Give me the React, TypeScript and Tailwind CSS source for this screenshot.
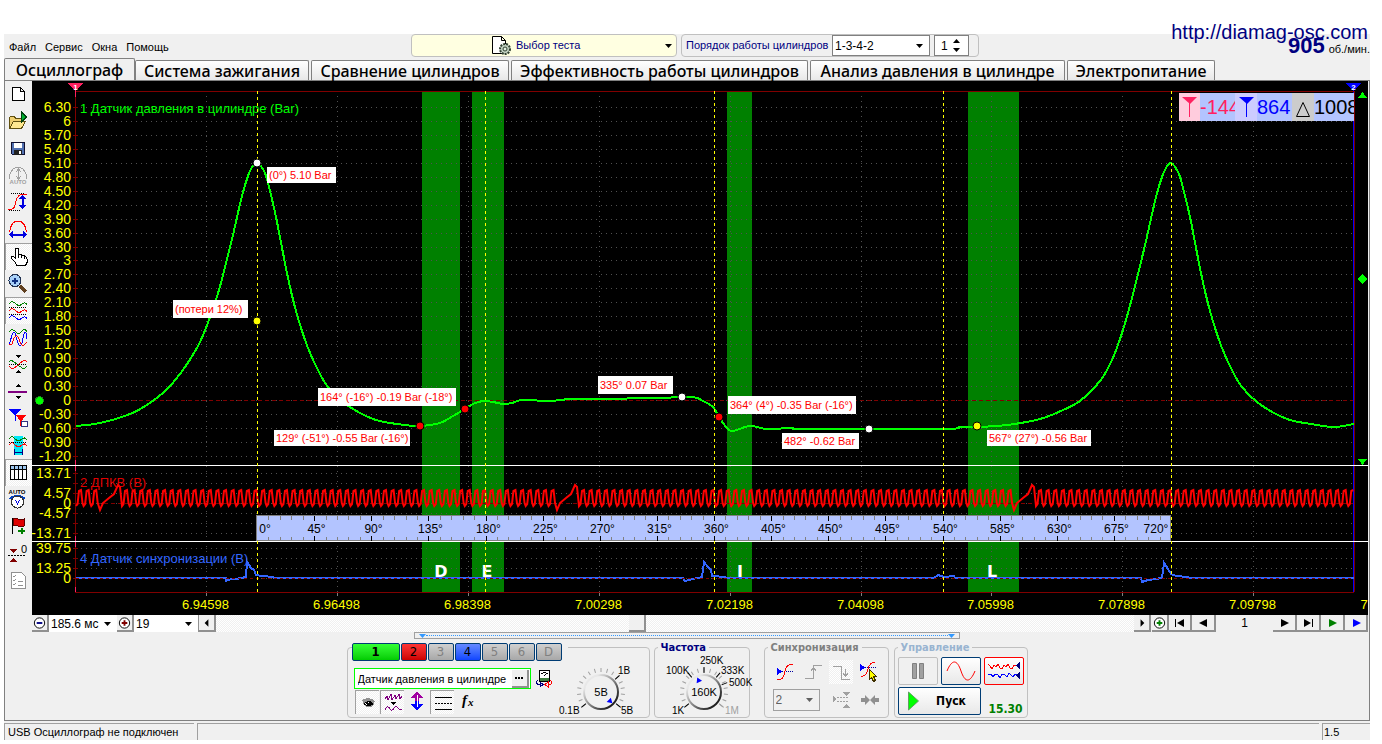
import type { ReactNode } from "react";

type Point = [number, number];

const smoothPath = (points: Point[]) => {
  let d = `M${points[0][0]} ${points[0][1]}`;
  for (let i = 0; i < points.length - 1; i++) {
    const before = points[i - 1] ?? points[i];
    const from = points[i];
    const to = points[i + 1];
    const after = points[i + 2] ?? to;
    d += `C${from[0] + (to[0] - before[0]) / 6} ${from[1] + (to[1] - before[1]) / 6} ${to[0] - (after[0] - from[0]) / 6} ${
      to[1] - (after[1] - from[1]) / 6
    } ${to[0]} ${to[1]}`;
  }
  return d;
};

const pressureCurve: Point[] = [
  [76, 426], [100, 423], [130, 414], [150, 403], [165, 391], [180, 374], [198, 346], [209, 320], [219, 290],
  [232, 239], [242, 196], [250, 171], [257, 163], [264, 171], [268, 183], [276, 217], [283, 253], [290, 287],
  [298, 318], [308, 348], [318, 370], [328, 387], [347, 405], [373, 419], [397, 424], [420, 426], [440, 423],
  [453, 416], [465, 409], [473, 404], [483, 401], [493, 402], [503, 404], [512, 403], [523, 400], [550, 401],
  [570, 399], [593, 399], [657, 398], [692, 397], [703, 401], [713, 407], [719, 417], [727, 428], [733, 431],
  [750, 426], [767, 429], [792, 428], [807, 429], [943, 429], [960, 427], [977, 427], [1007, 425], [1040, 419],
  [1063, 410], [1080, 401], [1100, 381], [1112, 360], [1123, 330], [1133, 294], [1146, 241], [1156, 197],
  [1164, 172], [1171, 163], [1178, 172], [1182, 184], [1190, 217], [1197, 253], [1204, 287], [1212, 318],
  [1222, 348], [1232, 370], [1242, 387], [1261, 405], [1287, 419], [1311, 424], [1334, 427], [1354, 424]
];

// crank sensor: 60 - 2 teeth per turn
const TURN = 457;
const TOOTH = TURN / 60;

const crankCurve = (() => {
  const points: Point[] = [];
  let x = 76;
  let gap = 100;
  while (x < 1353) {
    if (x + TOOTH > gap) {
      points.push([gap, 510], [gap + 3, 503], [gap + 9, 498], [gap + 14, 494], [gap + 18, 485], [gap + 20, 487]);
      x = gap + 22;
      gap += TURN;
    }
    points.push([x, 506], [x + 1.5, 504], [x + 3, 491], [x + 5, 490], [x + 6.5, 503]);
    x += TOOTH;
  }
  return points.filter((p) => p[0] < 1354).map((p) => p.join(",")).join(" ");
})();

const syncCurve =
  "76,578 226,578 226,581 231,579 236,579 246,577 247,562 251,568 254,570 256,575 262,576 273,577 274,578 683,578 685,581 693,579 702,577 704,562 708,567 711,570 712,576 725,577 726,578 934,578 938,575 944,577 954,576 955,578 1141,578 1142,582 1148,580 1162,578 1164,563 1168,569 1171,574 1176,576 1188,577 1189,578 1354,578";

const bands = [
  { x: 422, width: 38, letter: "D", letterX: 441 },
  { x: 472, width: 32, letter: "E", letterX: 487 },
  { x: 727, width: 25, letter: "I", letterX: 740 },
  { x: 968, width: 51, letter: "L", letterX: 992 }
];

const strokeLines = [257.5, 485.5, 714.5, 943.5, 1171.5];
const timeTicks = Array.from({ length: 9 }, (_, i) => 206.5 + i * 131 - (i > 5 ? 1 : 0));
const barRows = Array.from({ length: 26 }, (_, i) => ({
  y: Math.round(107 + i * 13.95) + 0.5,
  value: 6.3 - i * 0.3
}));
const sideRows = [473.5, 483.5, 493.5, 503.5, 513.5, 523.5, 533.5, 548.5, 558.5, 568.5, 578.5];

const sideLabels = [
  { y: 478, text: "13.71" },
  { y: 498, text: "4.57" },
  { y: 508, text: "0" },
  { y: 518, text: "-4.57" },
  { y: 538, text: "-13.71" },
  { y: 553, text: "39.75" },
  { y: 573, text: "13.25" },
  { y: 583, text: "0" }
];

const callouts = [
  { x: 267, y: 167, width: 69, height: 16, text: "(0°) 5.10 Bar" },
  { x: 173, y: 300, width: 75, height: 18, text: "(потери 12%)" },
  { x: 318, y: 388, width: 138, height: 18, text: "164° (-16°) -0.19 Bar (-18°)" },
  { x: 274, y: 430, width: 136, height: 16, text: "129° (-51°) -0.55 Bar (-16°)" },
  { x: 598, y: 376, width: 75, height: 18, text: "335° 0.07 Bar" },
  { x: 728, y: 396, width: 128, height: 18, text: "364° (4°) -0.35 Bar (-16°)" },
  { x: 782, y: 433, width: 77, height: 16, text: "482° -0.62 Bar" },
  { x: 987, y: 430, width: 104, height: 16, text: "567° (27°) -0.56 Bar" }
];

const dots = [
  { x: 257, y: 163, fill: "#fff" },
  { x: 257, y: 321, fill: "#ff0" },
  { x: 420, y: 426, fill: "#f00" },
  { x: 465, y: 409, fill: "#f00" },
  { x: 682, y: 397, fill: "#fff" },
  { x: 719, y: 417, fill: "#f00" },
  { x: 869, y: 429, fill: "#fff" },
  { x: 977, y: 426, fill: "#ff0" }
];

const rulerX = (deg: number) => Math.round(257 + (deg * 914) / 720) + 0.5;

const formatBar = (value: number) => {
  const rounded = Math.round(value * 10) / 10;
  return Number.isInteger(rounded) ? String(Math.abs(rounded)) : rounded.toFixed(2);
};

const Scope = () => (
  <div className="relative bg-black">
    <svg viewBox="32 81 1336 534" className="block w-full font-['Liberation_Sans',sans-serif]" shapeRendering="crispEdges">
      <g fill="green">
        {bands.map((band) => (
          <rect key={band.letter} x={band.x} y="92" width={band.width} height="500" />
        ))}
      </g>
      <g stroke="#505050" strokeDasharray="1 4">
        {barRows.map((row) => (
          <path key={row.y} d={`M81 ${row.y}H1353`} />
        ))}
        {sideRows.map((y) => (
          <path key={y} d={`M81 ${y}H1353`} />
        ))}
        {timeTicks.map((x) => (
          <path key={x} d={`M${x} 96V592`} />
        ))}
      </g>
      <g stroke="#808080">
        {timeTicks.map((x) => (
          <path key={x} d={`M${x} 592v4`} />
        ))}
      </g>
      <g fill="#fff" fontSize="16" fontWeight="700" textAnchor="middle" className="font-['DejaVu_Sans',sans-serif]">
        {bands.map((band) => (
          <text key={band.letter} x={band.letterX} y="577">{band.letter}</text>
        ))}
      </g>

      <path d="M75.5 91V592.5H1354" fill="none" stroke="#800000" />
      <g stroke="#800000">
        {[...barRows.map((row) => row.y), ...sideRows].map((y) => (
          <path key={y} d={`M73 ${y}h5`} />
        ))}
      </g>
      <path d="M76 400.5H1354M76 503.5H1354" stroke="#800000" strokeDasharray="4 3" />
      <path d="M1353.5 90V592" stroke="#00f" />
      <path d="M75 91.5H1354.5V592" fill="none" stroke="#800000" />
      <path d="M75.5 90v7M75.5 460v11M75.5 536v11M75.5 587v5" stroke="#ff2060" />
      <path d="M32 465.5H1368M32 541.5H1368" stroke="#fff" />

      <g fontSize="13">
        <text x="80" y="113" fill="#0f0">1 Датчик давления в цилиндре (Bar)</text>
        <text x="80" y="487" fill="#e00000">2 ДПКВ (В)</text>
        <text x="80" y="563" fill="#3366ff">4 Датчик синхронизации (В)</text>
      </g>

      <path d={smoothPath(pressureCurve)} fill="none" stroke="#0f0" strokeWidth="2" />
      <polyline points={crankCurve} fill="none" stroke="#f00" strokeWidth="2" shapeRendering="geometricPrecision" />
      <polyline points={syncCurve} fill="none" stroke="#3366ff" strokeWidth="2" />
      <path d="M76 578.5H1354" stroke="#800000" strokeDasharray="3 3" />
      <g stroke="#ff0" strokeDasharray="3 3">
        {strokeLines.map((x) => (
          <path key={x} d={`M${x} 91V592`} />
        ))}
      </g>

      <rect x="256.5" y="515.5" width="914" height="25" fill="#b3c4ff" stroke="#808080" />
      {Array.from({ length: 79 }, (_, i) => (i + 1) * 9).map((deg) => (
        <path
          key={deg}
          d={deg % 45 ? `M${rulerX(deg)} 516v4M${rulerX(deg)} 537v3` : `M${rulerX(deg)} 516v5M${rulerX(deg)} 536v5`}
          stroke={deg % 45 ? "#808080" : "#000"}
        />
      ))}
      <g fontSize="12" textAnchor="middle">
        {Array.from({ length: 17 }, (_, i) => i * 45).map((deg) => (
          <text key={deg} x={deg === 0 ? 265 : deg === 720 ? 1156 : rulerX(deg) + 2} y="533">{deg}°</text>
        ))}
      </g>

      <g fontSize="14" fill="#ff0" textAnchor="end">
        {barRows.map((row) => (
          <text key={row.y} x="71" y={row.y + 4.5}>{formatBar(row.value)}</text>
        ))}
        {sideLabels.map((label) => (
          <text key={label.y} x="71" y={label.y}>{label.text}</text>
        ))}
      </g>
      <g fontSize="13" fill="#ff0" textAnchor="middle">
        {timeTicks.map((x, i) => (
          <text key={x} x={x - 1} y="609">{(6.94598 + i * 0.019).toFixed(5)}</text>
        ))}
        <text x="1364" y="609">7</text>
      </g>

      <g stroke="#000" shapeRendering="geometricPrecision">
        {dots.map((dot) => (
          <circle key={dot.x + dot.y} cx={dot.x} cy={dot.y} r="4" fill={dot.fill} />
        ))}
      </g>
      {callouts.map((box) => (
        <g key={box.text}>
          <rect x={box.x} y={box.y} width={box.width} height={box.height} fill="#fff" />
          <text x={box.x + 2} y={box.y + box.height / 2 + 4} fontSize="11" fill="#f00">{box.text}</text>
        </g>
      ))}

      <path d="M68 83h15l-7.500 8z" fill="#ff2060" />
      <path d="M1346 83h15l-7.500 8z" fill="#00f" />
      <g fill="#fff" fontSize="8" fontWeight="700" textAnchor="middle">
        <text x="75.500" y="90">1</text>
        <text x="1353.500" y="90">2</text>
      </g>
      <path d="M1358 98h9l-4.500-6zM1358 459h9l-4.500 6zM1362.500 274l5 5-5 5-5-5z" fill="#0f0" />
      <circle cx="39.500" cy="400.500" r="4" fill="#0f0" stroke="#208020" />
    </svg>

    <div className="absolute top-3 right-[14px] flex h-7 w-[175px] items-center overflow-hidden bg-[#b3c4ff] font-['Liberation_Sans',sans-serif] text-xl leading-7">
      <svg viewBox="0 0 21 28" className="h-7 w-[21px] shrink-0 bg-[#ffccdd]">
        <path d="M3 4h15l-7 7z" fill="#ff2060" />
        <path d="M10.500 8v16" stroke="#ff2060" />
      </svg>
      <span className="w-[35px] shrink-0 overflow-hidden text-[#ff2060]">-144</span>
      <svg viewBox="0 0 22 28" className="h-7 w-[22px] shrink-0 bg-[#ccccff]">
        <path d="M4 4h15l-7 7z" fill="#00f" />
        <path d="M11.500 8v16" stroke="#00f" />
      </svg>
      <span className="w-[35px] shrink-0 overflow-hidden text-[#0000ff]">864</span>
      <svg viewBox="0 0 22 28" className="h-7 w-[22px] shrink-0 bg-[#cccccc]">
        <path d="M4.500 23.500h13l-6.500-14z" fill="none" stroke="#000" />
      </svg>
      <span className="shrink-0 text-black">1008</span>
    </div>
  </div>
);

interface Tool {
  label: string;
  pressed?: boolean;
  art: ReactNode;
}

const tools: Tool[] = [
  {
    label: "Новый",
    art: <path d="M7.500 6.500h8l4 4v9h-12zM15.500 6.500v4h4" fill="#fff" stroke="#000" />
  },
  {
    label: "Открыть",
    art: (
      <>
        <path d="M4.500 20.500v-11l1-1h4l1 2h6v3" fill="#f0d070" stroke="#605010" />
        <path d="M4.500 20.500l4-7h12l-4 7z" fill="#ffe890" stroke="#605010" />
        <path d="M16.500 4v10l5-5z" fill="#00b030" stroke="#004010" />
      </>
    )
  },
  {
    label: "Сохранить",
    art: (
      <>
        <path d="M6.500 7.500h13v12h-12l-1-1z" fill="#5070b0" stroke="#101030" />
        <path d="M9 8h8v5H9z" fill="#fff" />
        <path d="M9 15h8v5H9z" fill="#202020" />
        <path d="M14 16h2v3h-2z" fill="#fff" />
      </>
    )
  },
  {
    label: "Автомасштаб",
    art: (
      <g fill="none" stroke="#a0a0a0">
        <path d="M4.500 17v-4c2-5 5-8 8.500-8s6.500 3 8.500 8v4M13.500 7v10M11 10l2.500-3 2.500 3M11 14l2.500 3 2.500-3" />
        <text x="13" y="22" fontSize="6" fontWeight="700" textAnchor="middle" fill="#a0a0a0" stroke="none">AUTO</text>
      </g>
    )
  },
  {
    label: "Масштаб по вертикали",
    art: (
      <g fill="none">
        <path d="M6 4.500h14M4 21.500h12" stroke="#000" strokeDasharray="1 1" />
        <path d="M3 20c7 2 7-4 8-8s4-9 11-6" stroke="#f00" />
        <path d="M17.500 7v12" stroke="#0000e0" strokeWidth="2" />
        <path d="M14 10l3.500-4 3.500 4zM14 16l3.500 4 3.500-4z" fill="#0000e0" />
      </g>
    )
  },
  {
    label: "Масштаб по горизонтали",
    art: (
      <g fill="none">
        <path d="M4.500 16c1-7 4-11 8.500-11s7.500 4 8.500 11" stroke="#f00" />
        <path d="M6 18.500h14" stroke="#0000e0" strokeWidth="2" />
        <path d="M8 15l-4 3.500L8 22zM18 15l4 3.500-4 3.500z" fill="#0000e0" />
      </g>
    )
  },
  {
    label: "Рука",
    pressed: true,
    art: (
      <path
        d="M11.500 22.500l-1-3-4-4c-1-2 1-3 2-2l2 2v-9c0-2 3-2 3 0v6c0-2 3-2 3 0v1c0-2 3-1 3 0v1c1-1 2.500-.500 2.500 1v4l-1.500 3zM13.500 12v3M16.500 13v2M19.500 14v2"
        fill="#fff"
        stroke="#000"
      />
    )
  },
  {
    label: "Увеличить",
    art: (
      <>
        <path d="M15 16l6 6" stroke="#604020" strokeWidth="3" />
        <circle cx="10" cy="10.500" r="6" fill="#a8d0f8" stroke="#203050" />
        <path d="M10 7.500v6M7 10.500h6" stroke="#103080" strokeWidth="2" />
      </>
    )
  },
  {
    label: "Разделить каналы",
    pressed: true,
    art: (
      <g fill="none">
        <path d="M4 7c3-4 5-2 7 0s4 2 6 0 4-1 5 1" stroke="#008000" />
        <path d="M4 14c3-4 5-2 7 0s4 2 6 0 4-1 5 1" stroke="#f00" />
        <path d="M4 21c3-4 5-2 7 0s4 2 6 0 4-1 5 1" stroke="#00f" />
        <path d="M4 10.500h18M4 17.500h18" stroke="#000" strokeDasharray="1 1" />
      </g>
    )
  },
  {
    label: "Наложить каналы",
    art: (
      <g fill="none">
        <path d="M4 8c3-4 5-2 7 0s4 2 6-1 4-1 5 1" stroke="#008000" />
        <path d="M4 20c2-3 3-12 5-12s3 14 6 14 3-14 5-14 2 5 2 7" stroke="#00f" />
        <path d="M4 20c2 2 3 1 4-3s4-8 6-2 3 7 5 6l3-3" stroke="#f00" />
      </g>
    )
  },
  {
    label: "Совместить нули",
    art: (
      <g fill="none">
        <path d="M4 11c2-3 4-1 9 3s7 5 9 1" stroke="#008000" />
        <path d="M4 15c2 4 5 3 9-1s7-6 9-3" stroke="#f00" />
        <path d="M4 13.500h18" stroke="#000" strokeDasharray="1 1" />
        <path d="M11 4h5l-2.500 3zM11 22h5l-2.500-3z" fill="#000" />
      </g>
    )
  },
  {
    label: "Курсор уровня",
    art: (
      <>
        <path d="M3 13.500h19" stroke="#800080" strokeWidth="2" />
        <path d="M11 9h5l-2.500-3zM11 18h5l-2.500 3z" />
      </>
    )
  },
  {
    label: "Маркеры",
    art: (
      <>
        <path d="M4 4h12l-6 7z" fill="#00f" />
        <path d="M10.500 8v8" stroke="#00f" />
        <path d="M11 10h10l-5 7z" fill="#f00" />
        <path d="M15.500 13v8" stroke="#f00" />
        <path d="M16.500 16.500h6v5h-6z" fill="#fff" stroke="#303080" />
      </>
    )
  },
  {
    label: "Область",
    art: (
      <g fill="none">
        <path d="M9 4h9v19H9z" fill="#00e8f8" />
        <path d="M4 7c3-4 4-2 6 0s5 2 7 0 3-1 5 1" stroke="#008000" />
        <path d="M4 13c3-4 4-2 6 0s5 2 7 0 3-1 5 1" stroke="#f00" />
        <path d="M4 10.500h18" stroke="#000" strokeDasharray="1 1" />
        <path d="M9.500 17v6M17.500 17v6M9 20.500h9" stroke="#000080" />
      </g>
    )
  },
  {
    label: "Таблица",
    pressed: true,
    art: (
      <>
        <path d="M5.500 6.500h16v14h-16z" fill="#fff" stroke="#000" />
        <path d="M6 7h15v3H6z" fill="#a0c8f0" />
        <path d="M5 10.500h17M9.500 7v13M13.500 7v13M17.500 7v13" stroke="#000" />
      </>
    )
  },
  {
    label: "Авто вольтметр",
    art: (
      <>
        <text x="12" y="8" fontSize="6" fontWeight="700" textAnchor="middle">AUTO</text>
        <path d="M5 13c3-4 11-4 15 0" fill="none" stroke="#0040c0" strokeWidth="2" />
        <circle cx="12.500" cy="16" r="6" fill="#fff" stroke="#303030" />
        <path d="M10.500 14l2 4 2-4" fill="none" stroke="#0000e0" />
      </>
    )
  },
  {
    label: "Добавить метку",
    art: (
      <>
        <path d="M7.500 5v16" stroke="#000" />
        <path d="M8 6c4-2 6 2 11 0v7c-5 2-7-2-11 0z" fill="#e00000" stroke="#600000" />
        <path d="M16.500 15v6M13 18h7" stroke="#008000" strokeWidth="2" />
      </>
    )
  },
  {
    label: "Обнулить",
    art: (
      <>
        <path d="M4 9h8l-4 4zM4 22h8l-4-4z" fill="#800000" />
        <path d="M3 15.500h18" stroke="#000" strokeDasharray="2 1" />
        <text x="19" y="13" fontSize="11" textAnchor="middle">0</text>
      </>
    )
  },
  {
    label: "Список",
    art: (
      <>
        <path d="M6.500 5.500h10l4 4v12h-14z" fill="#fff" stroke="#909090" />
        <path d="M8 9l1 1 2-2M8 13l1 1 2-2M8 17l1 1 2-2M13 14.500h5M13 18.500h5" fill="none" stroke="#909090" />
      </>
    )
  }
];

const Toolbar = () => (
  <div className="flex w-[27px] shrink-0 flex-col">
    {tools.map((tool) => (
      <button
        key={tool.label}
        type="button"
        title={tool.label}
        className={`h-[27px] w-[27px] ${
          tool.pressed
            ? "bg-[repeating-conic-gradient(#fff_0_25%,#f0f0f0_0_50%)] bg-[length:2px_2px] shadow-[inset_1px_1px_#a0a0a0]"
            : ""
        }`}
      >
        <svg viewBox="0 0 27 27" width="27" height="27" shapeRendering="crispEdges">
          {tool.art}
        </svg>
      </button>
    ))}
  </div>
);

const Arrow = ({ className = "" }: { className?: string }) => (
  <svg viewBox="0 0 7 4" className={`pointer-events-none h-1 w-[7px] ${className}`}>
    <path d="M0 0h7L3.500 4z" fill="currentColor" />
  </svg>
);

interface ComboProps {
  label: string;
  value: string;
  className?: string;
}

const Combo = ({ label, value, className = "" }: ComboProps) => (
  <div className={`relative flex items-center bg-white ${className}`}>
    <select aria-label={label} className="h-full w-full appearance-none bg-transparent pl-[2px] text-xs leading-4 outline-none">
      <option>{value}</option>
    </select>
    <Arrow className="absolute right-[6px]" />
  </div>
);

const BevelButton = ({ label, className, children }: { label: string; className: string; children: ReactNode }) => (
  <button
    type="button"
    title={label}
    className={`flex h-[17px] shrink-0 items-center justify-center border-r-2 border-b-2 border-[#909090] bg-[#f0f0f0] ${className}`}
  >
    <svg viewBox="0 0 16 14" width="16" height="14">
      {children}
    </svg>
  </button>
);

const BottomBar = () => (
  <div className="flex h-[17px] items-stretch">
    <BevelButton label="Уменьшить" className="w-[17px]">
      <circle cx="8" cy="7" r="5.500" fill="#fff" stroke="#000" />
      <path d="M5 7h6" stroke="#000080" strokeWidth="2" />
    </BevelButton>
    <Combo label="Развёртка" value="185.6 мс" className="w-[68px]" />
    <BevelButton label="Увеличить" className="w-[17px]">
      <circle cx="8" cy="7" r="5.500" fill="#fff" stroke="#000" />
      <path d="M5 7h6M8 4v6" stroke="#800000" strokeWidth="2" />
    </BevelButton>
    <Combo label="Масштаб" value="19" className="w-16" />
    <BevelButton label="Влево" className="w-[18px] border-l">
      <path d="M10 3v8L6 7z" />
    </BevelButton>
    <div className="flex flex-1 justify-center bg-[repeating-conic-gradient(#fff_0_25%,#f0f0f0_0_50%)] bg-[length:2px_2px]">
      <div className="mr-[75px] w-[17px] border-r-2 border-b-2 border-[#909090] bg-[#f0f0f0]" />
    </div>
    <BevelButton label="Вправо" className="w-[17px]">
      <path d="M7 3v8l4-4z" />
    </BevelButton>
    <BevelButton label="Добавить" className="ml-px w-[17px]">
      <circle cx="8" cy="7" r="5.500" fill="#fff" stroke="#000" />
      <path d="M5 7h6M8 4v6" stroke="green" strokeWidth="2" />
    </BevelButton>
    <BevelButton label="В начало" className="w-[23px]">
      <path d="M3 3h1v8H3zM12 3v8L5 7z" />
    </BevelButton>
    <BevelButton label="Назад" className="w-6">
      <path d="M12 3v8L4 7z" />
    </BevelButton>
    <span className="w-[57px] text-center text-xs leading-4">1</span>
    <BevelButton label="Вперёд" className="w-6">
      <path d="M5 3v8l8-4z" />
    </BevelButton>
    <BevelButton label="В конец" className="w-6">
      <path d="M4 3v8l7-4zM12 3h1v8h-1z" />
    </BevelButton>
    <BevelButton label="Воспроизвести" className="w-6">
      <path d="M5 3v8l8-4z" fill="green" />
    </BevelButton>
    <BevelButton label="Воспроизвести всё" className="w-[23px]">
      <path d="M5 3v8l8-4z" fill="#00f" />
    </BevelButton>
  </div>
);

const channels = [
  { name: "1", className: "w-12 bg-linear-to-b from-[#33ff33] to-[#00cc00] font-bold text-black" },
  { name: "2", className: "w-[26px] bg-linear-to-b from-[#ff3333] to-[#cc0000] text-black" },
  { name: "3", className: "w-[26px] bg-linear-to-b from-[#d0d0d0] to-[#a8a8a8] text-[#808080]" },
  { name: "4", className: "w-[26px] bg-linear-to-b from-[#6688ff] to-[#1144ff] text-black" },
  { name: "5", className: "w-[26px] bg-linear-to-b from-[#d0d0d0] to-[#a8a8a8] text-[#808080]" },
  { name: "6", className: "w-[26px] bg-linear-to-b from-[#d0d0d0] to-[#a8a8a8] text-[#808080]" },
  { name: "D", className: "w-[26px] bg-linear-to-b from-[#d0d0d0] to-[#a8a8a8] text-[#808080]" }
];

interface KnobProps {
  label: string;
  value: string;
  pointer: number;
  viewBox: string;
  className: string;
  marks: { angle: number; text: string; x: number; y: number; muted?: boolean }[];
}

// angles run clockwise from twelve o'clock, the dial centre is 0 0
const Knob = ({ label, value, pointer, viewBox, className, marks }: KnobProps) => (
  <div className={`relative shrink-0 ${className}`}>
    <svg viewBox={viewBox} className="h-full w-full overflow-visible">
      <defs>
        <linearGradient id="knobRim" x1="0" y1="0" x2="1" y2="1">
          <stop offset="0.200" stopColor="#e8e8e8" />
          <stop offset="0.850" stopColor="#202020" />
        </linearGradient>
      </defs>
      {Array.from({ length: 17 }, (_, i) => -128 + i * 16).map((angle) => (
        <path key={angle} d="M0-20v-4" stroke="#a0a0a0" transform={`rotate(${angle})`} />
      ))}
      <circle r="17" fill="#f0f0f0" stroke="url(#knobRim)" strokeWidth="2" />
      {marks.map((mark) => (
        <g key={mark.text}>
          <path d="M0-19v-6" stroke={mark.muted ? "#a0a0a0" : "#000"} transform={`rotate(${mark.angle})`} />
          <text x={mark.x} y={mark.y} fontSize="10" fill={mark.muted ? "#a0a0a0" : "#000"}>{mark.text}</text>
        </g>
      ))}
      <path d="M-3-11h6l-3-5z" fill="#00f" transform={`rotate(${pointer})`} />
      <text y="4" fontSize="11" textAnchor="middle">{value}</text>
    </svg>
    <input type="range" aria-label={label} className="absolute inset-0 h-full w-full cursor-pointer opacity-0" />
  </div>
);

const channelTools: Tool[] = [
  {
    label: "Показать",
    pressed: true,
    art: (
      <>
        <path d="M6 9c4-3 11-2 13 1l-2 5c-4 2-7 1-9-1z" fill="#909090" />
        <path d="M8 13c2-3 6-3 9 0-3 2-6 2-9 0z" fill="#fff" stroke="#000" />
        <circle cx="13" cy="12.500" r="2.500" />
        <path d="M12 11h1v1h-1z" fill="#fff" />
      </>
    )
  },
  {
    label: "Фильтр",
    pressed: true,
    art: (
      <>
        <path d="M4 8l2-3 1 4 3-6 1 6 3-5 1 4 3-5 1 5 2-3" fill="none" stroke="#800080" />
        <path d="M10 11h5l-2.500 3z" />
        <path d="M4 19c2-5 4-3 5-1s3 1 4-1 3-2 4 0 2 2 4 1" fill="none" stroke="#800080" />
      </>
    )
  },
  {
    label: "Инверсия",
    art: (
      <>
        <path d="M12 2l7 6h-5v4h-4V8H5z" fill="#a000a0" />
        <path d="M12 20l7-6h-5v-3h-4v3H5z" fill="#0000ff" />
        <path d="M12 5v12" stroke="#fff" />
      </>
    )
  },
  {
    label: "Линии",
    pressed: true,
    art: (
      <>
        <path d="M4 6.500h17M4 18.500h17" stroke="#000" />
        <path d="M4 12.500h17" stroke="#000" strokeDasharray="2 1" />
      </>
    )
  },
  {
    label: "Функция",
    art: (
      <g className="font-['Liberation_Serif',serif]" fontStyle="italic" fontWeight="700">
        <text x="7" y="15" fontSize="15">f</text>
        <text x="13" y="16" fontSize="11">x</text>
      </g>
    )
  }
];

const syncTools: Tool[] = [
  {
    label: "По уровню",
    art: (
      <g fill="none">
        <path d="M4 8l5 3.500L4 15z" fill="#00f" />
        <path d="M9 11.500h12" stroke="#0000a0" strokeDasharray="1 1" />
        <path d="M4 19c6 2 7-3 8-8s3-7 8-7" stroke="#f00" />
      </g>
    )
  },
  {
    label: "По фронту",
    art: <path d="M4 18.500h8.500v-13h8M12.500 8v5M10 11l2.500-3.500 2.500 3.500" fill="none" stroke="#a0a0a0" />
  },
  {
    label: "По спаду",
    pressed: true,
    art: <path d="M4 6.500h8.500v13h8M16.500 9v7M14 13l2.500 3.500 2.500-3.500" fill="none" stroke="#a0a0a0" />
  },
  {
    label: "Выбрать уровень",
    art: (
      <g fill="none">
        <path d="M3 4l5 3.500L3 11z" fill="#00f" />
        <path d="M8 7.500h12" stroke="#0000a0" strokeDasharray="1 1" />
        <path d="M4 16c5 1 6-3 7-7s3-7 7-6" stroke="#f00" />
        <path d="M12.500 9.500v10l2-2 2 4 2-1-2-4h3z" fill="#ff0" stroke="#403000" />
      </g>
    )
  }
];

const SmallTool = ({ tool }: { tool: Tool }) => (
  <button
    type="button"
    title={tool.label}
    className={`h-6 w-6 ${tool.pressed ? "bg-[repeating-conic-gradient(#fff_0_25%,#f0f0f0_0_50%)] bg-[length:2px_2px]" : ""}`}
  >
    <svg viewBox="0 0 24 24" width="24" height="24" shapeRendering="crispEdges">
      {tool.art}
    </svg>
  </button>
);

const groupClass = "rounded border border-[#c0c0c0]";
const legendClass = "ml-[3px] h-[9px] px-[3px] text-[11px] leading-[9px] font-bold font-['DejaVu_Sans_Condensed',sans-serif]";

const ControlPanel = () => (
  <div className="flex h-[75px] justify-center">
    <fieldset className={`w-[303px] ${groupClass}`}>
      <legend className="ml-1 flex h-[9px] items-start gap-px pr-[6px] font-['DejaVu_Sans_Condensed',sans-serif]">
        {channels.map((channel) => (
          <button
            key={channel.name}
            type="button"
            className={`h-[18px] shrink-0 rounded-xs border border-[#003c74] text-center text-[13px] leading-4 ${channel.className}`}
          >
            {channel.name}
          </button>
        ))}
      </legend>
      <div className="flex">
        <div className="w-[200px] shrink-0 pt-4 pl-[6px]">
          <div className="flex items-center gap-1">
            <div className="flex h-[21px] w-[177px] shrink-0 items-center border border-[#00ff00] bg-white pr-px">
              <input
                aria-label="Название канала"
                defaultValue="Датчик давления в цилиндре"
                className="min-w-0 flex-1 pl-[3px] text-[11px] leading-4 outline-none"
              />
              <button type="button" title="Выбрать датчик" className="flex h-[18px] w-[17px] items-center justify-center gap-px border-r-2 border-b-2 border-[#909090] bg-[#f0f0f0]">
                <i className="size-[2px] bg-black" />
                <i className="size-[2px] bg-black" />
                <i className="size-[2px] bg-black" />
              </button>
            </div>
            <button type="button" title="Сменить прибор" className="shrink-0">
              <svg viewBox="0 0 19 19" width="19" height="19" shapeRendering="crispEdges">
                <path d="M4.500 1.500h10v11h-10z" fill="#fff" stroke="#000" />
                <path d="M5 9h9v3H5z" fill="#408040" />
                <path d="M6.500 5c2-2 4-2 6 0M9.500 7l2-3" fill="none" stroke="#000" />
                <path d="M3 11c-3 2-2 4 2 5M5 13v5l3-2.500z" fill="none" stroke="#000080" />
                <path d="M15 11c3 2 3 4-2 5M13 13v5l-3-2.500z" fill="none" stroke="#f00" />
              </svg>
            </button>
          </div>
          <div className="flex gap-px pt-px pl-px">
            {channelTools.map((tool) => (
              <div key={tool.label} className={`h-6 w-6 overflow-hidden ${tool.pressed ? "border-t border-l border-[#a0a0a0]" : ""}`}>
                <SmallTool tool={tool} />
              </div>
            ))}
          </div>
        </div>
        <Knob
          label="Чувствительность"
          value="5В"
          pointer={135}
          viewBox="-53 -40 98 65"
          className="h-[65px] w-[98px]"
          marks={[
            { angle: 48, text: "1В", x: 17, y: -18 },
            { angle: -128, text: "0.1В", x: -42, y: 22 },
            { angle: 128, text: "5В", x: 20, y: 22 }
          ]}
        />
      </div>
    </fieldset>

    <fieldset className={`ml-1 w-[96px] ${groupClass}`}>
      <legend className={`${legendClass} text-[#000080]`}>Частота</legend>
      <Knob
        label="Частота"
        value="160K"
        pointer={-25}
        viewBox="-49 -40 94 65"
        className="h-[65px] w-[94px]"
        marks={[
          { angle: -128, text: "1K", x: -32, y: 22 },
          { angle: -40, text: "100K", x: -38, y: -18 },
          { angle: 0, text: "250K", x: -4, y: -28 },
          { angle: 40, text: "333K", x: 17, y: -18 },
          { angle: 68, text: "500K", x: 25, y: -6 },
          { angle: 128, text: "1M", x: 21, y: 22, muted: true }
        ]}
      />
    </fieldset>

    <fieldset className={`ml-[14px] w-[125px] ${groupClass}`}>
      <legend className={`${legendClass} text-[#808080]`}>Синхронизация</legend>
      <div className="grid grid-cols-[24px_24px_24px_24px] gap-x-1 gap-y-[5px] pt-2 pl-2">
        {syncTools.map((tool) => (
          <SmallTool key={tool.label} tool={tool} />
        ))}
        <Combo label="Канал синхронизации" value="2" className="col-span-2 h-[22px] w-[47px] border border-[#a0a0a0] bg-[#f0f0f0]! text-[#606060]" />
        <button type="button" title="Окно синхронизации" className="h-[22px]">
          <svg viewBox="0 0 24 22" width="24" height="22" shapeRendering="crispEdges">
            <path d="M13 3h8l-4 4zM13 19h8l-4-4zM4 7l4 3-4 3z" fill="#a0a0a0" />
            <path d="M8 8.500h12M8 12.500h12" stroke="#a0a0a0" strokeDasharray="2 1" />
          </svg>
        </button>
        <button type="button" title="Свести" className="h-[22px]">
          <svg viewBox="0 0 24 22" width="24" height="22">
            <path d="M4 9h4V6l5 5-5 5v-3H4zM22 9h-4V6l-5 5 5 5v-3h4z" fill="#909090" />
          </svg>
        </button>
      </div>
    </fieldset>

    <fieldset className={`ml-[5px] w-[134px] ${groupClass}`}>
      <legend className={`${legendClass} text-[#99b4d1]`}>Управление</legend>
      <div className="grid grid-cols-[40px_40px_40px] gap-x-[3px] gap-y-[2px] pt-[5px] pl-[3px]">
        <button type="button" title="Пауза" className="flex h-7 items-center justify-center rounded-xs border border-[#c0c0c0]">
          <svg viewBox="0 0 12 16" width="12" height="16">
            <path d="M.500.500h4v15h-4zM7.500.500h4v15h-4z" fill="#a0a0a0" stroke="#808080" />
          </svg>
        </button>
        <button type="button" title="Одиночный" className="flex h-7 items-center justify-center rounded-xs border border-[#003c74] bg-linear-to-b from-white to-[#e8e8e8]">
          <svg viewBox="0 0 32 20" width="32" height="20">
            <path d="M2 10C7-2 12-2 16 10s9 12 14 0" fill="none" stroke="#f00" />
          </svg>
        </button>
        <button type="button" title="Непрерывный" className="flex h-7 items-center justify-center rounded-xs border border-[#f00] bg-linear-to-b from-white to-[#e8e8e8]">
          <svg viewBox="0 0 34 20" width="34" height="20" shapeRendering="crispEdges">
            <path d="M1 3l2 2 2 3 2-4 2 2 2-3 2 4 2 1 2-4 2 2 2-3 2 4 2 1 2-4 2 1" fill="none" stroke="#f00" />
            <path d="M1 14l3-1 2 3 2-3 3 1 2 3 2-4 3 1 2 2 2-4 2 2 2 2 2-3 2 1" fill="none" stroke="#00f" />
            <path d="M33 1v7l-4-3.500zM33 11v7l-4-3.500z" fill="#000080" />
          </svg>
        </button>
        <button
          type="button"
          className="col-span-2 flex h-7 items-center rounded-xs border border-[#003c74] bg-linear-to-b from-white to-[#e8e8e8] pl-[9px] font-['DejaVu_Sans_Condensed',sans-serif] text-xs font-bold"
        >
          <svg viewBox="0 0 11 20" width="11" height="20">
            <path d="M.500 1v18l10-9z" fill="#0f0" stroke="#60a060" />
          </svg>
          <span className="flex-1 pl-1 text-center">Пуск</span>
        </button>
        <output className="pt-4 pl-1 text-center font-['DejaVu_Sans_Condensed',sans-serif] text-xs leading-3 font-bold text-[#008000]">15.30</output>
      </div>
    </fieldset>
  </div>
);

const tabs = [
  { title: "Система зажигания", width: "w-[174px]" },
  { title: "Сравнение цилиндров", width: "w-[198px]" },
  { title: "Эффективность работы цилиндров", width: "w-[297px]" },
  { title: "Анализ давления в цилиндре", width: "w-[255px]" },
  { title: "Электропитание", width: "w-[148px]" }
];

const Header = () => (
  <div className="flex h-6 items-start">
    <nav className="flex w-[407px] shrink-0 gap-[9px] pt-[5px] pl-[5px] text-[11px] leading-4">
      {["Файл", "Сервис", "Окна", "Помощь"].map((item) => (
        <button key={item} type="button">{item}</button>
      ))}
    </nav>
    <button
      type="button"
      className="relative flex h-[23px] w-[266px] shrink-0 items-center rounded border border-[#c0c0c0] bg-[#ffffe1] pl-[79px] text-[11px] text-[#000080]"
    >
      <svg viewBox="0 0 21 21" width="21" height="21" className="mr-1">
        <path d="M1.500 1.500h9l4 4v13h-13zM10.500 1.500v4h4" fill="#fff" stroke="#000" />
        <circle cx="14" cy="14" r="5" fill="#c0d0c0" stroke="#304030" strokeWidth="2" strokeDasharray="2 1" />
        <circle cx="14" cy="14" r="2" fill="#e0f0e0" stroke="#304030" />
      </svg>
      Выбор теста
      <Arrow className="absolute right-1 text-black" />
    </button>
    <div className="ml-1 flex h-[23px] w-[298px] shrink-0 items-center rounded border border-[#c0c0c0] pl-1">
      <span className="w-[146px] text-[11px] whitespace-nowrap text-[#000080]">Порядок работы цилиндров</span>
      <Combo label="Порядок работы цилиндров" value="1-3-4-2" className="h-[21px] w-[98px] border border-[#808080]" />
      <div className="ml-1 flex h-[21px] w-[35px] items-center border border-[#808080] bg-white">
        <input aria-label="Номер цилиндра" defaultValue="1" className="w-[18px] pl-[6px] text-xs outline-none" />
        <span className="flex flex-col items-center gap-[5px]">
          <Arrow className="rotate-180" />
          <Arrow />
        </span>
      </div>
    </div>
    <div className="flex flex-1 items-baseline justify-end gap-1 text-[11px] leading-[24px]">
      <b className="text-[22px] text-[#000080]">905</b>
      <span>об./мин.</span>
    </div>
  </div>
);

const App = () => (
  <div className="relative min-h-screen bg-white pt-[34px] font-['Liberation_Sans',sans-serif] text-black">
    <a href="http://diamag-osc.com" className="absolute top-5 right-[14px] text-xl leading-6 text-[#000080]">
      http://diamag-osc.com
    </a>
    <div className="mr-3 ml-1 bg-[#f0f0f0]">
      <Header />
      <div className="flex items-end gap-[2px] font-['Noto_Sans',sans-serif] text-base font-medium">
        <button type="button" className="-mr-[2px] h-[22px] w-[131px] rounded-t-xs border border-b-0 border-[#808080] leading-5">
          Осциллограф
        </button>
        {tabs.map((tab) => (
          <button
            key={tab.title}
            type="button"
            className={`h-5 overflow-visible rounded-t-xs border border-b-0 border-[#808080] bg-linear-to-b from-white to-[#e8e8e8] leading-5 whitespace-nowrap ${tab.width}`}
          >
            {tab.title}
          </button>
        ))}
      </div>

      <main className="border border-[#808080] pb-[2px]">
        <div className="flex pr-px">
          <Toolbar />
          <div className="min-w-0 flex-1">
            <Scope />
            <BottomBar />
          </div>
        </div>
        <div className="mx-auto mb-1 flex h-[7px] w-[546px] items-center justify-between border border-[#a0a0a0] px-1 text-[#3399ff]">
          <Arrow />
          <div className="flex-1 border-t border-dotted border-[#3399ff]" />
          <Arrow />
        </div>
        <ControlPanel />
      </main>

      <footer className="flex gap-[3px] bg-[#f0f0f0] pt-[2px] text-[11px] leading-4">
        <div className="w-[190px] border-t border-l border-[#a0a0a0] pl-[3px]">USB Осциллограф не подключен</div>
        <div className="flex-1 border-t border-l border-[#a0a0a0]" />
        <div className="w-12 border-t border-l border-[#a0a0a0] pl-px">1.5</div>
      </footer>
    </div>
  </div>
);

export default App;
